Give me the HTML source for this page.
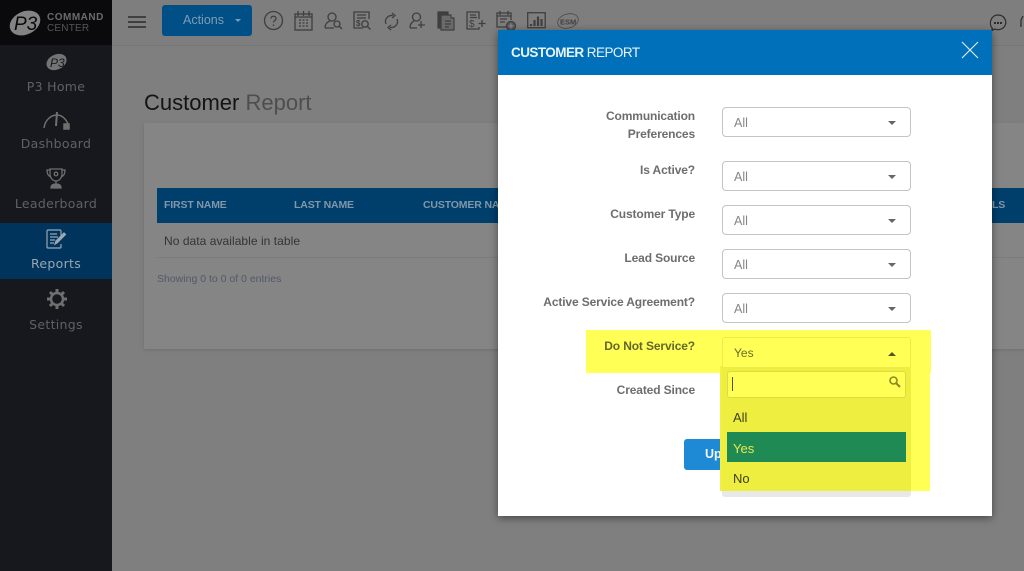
<!DOCTYPE html>
<html><head><meta charset="utf-8"><style>
html,body{margin:0;padding:0;width:1024px;height:571px;overflow:hidden;background:#7f7f7f;font-family:"Liberation Sans",sans-serif}
div,span{position:absolute;white-space:nowrap}
svg{position:absolute;overflow:visible}
.nav{left:0;width:112px;text-align:center;color:#5f6164;letter-spacing:.3px;font-family:"DejaVu Sans","Liberation Sans",sans-serif;font-size:12.5px}
.th{top:199px;font-size:10.5px;font-weight:bold;color:#7f97a8;letter-spacing:-.15px}
.lb{font-size:12px;font-weight:bold;color:#6d6d6d;text-align:right;line-height:18px;letter-spacing:-.13px;right:329px}
.sel{left:722px;width:187px;height:28px;border:1px solid #c4c4c4;border-radius:4px;background:#fff}
.sel span{left:11px;top:8px;font-size:12.5px;color:#858585}
.sel i{position:absolute;left:165px;top:13px;width:0;height:0;border-left:4px solid transparent;border-right:4px solid transparent;border-top:4px solid #666}
.ic{fill:none;stroke:#3f3f3f;stroke-width:1.3}
</style></head><body>
<!-- topbar -->
<div style="left:112px;top:0;width:912px;height:45px;background:#7e7e7e;border-bottom:1px solid #767676"></div>
<!-- sidebar -->
<div style="left:0;top:0;width:112px;height:571px;background:#16181d"></div>
<div style="left:0;top:0;width:112px;height:45px;background:#0a0a0c"></div>
<svg style="left:9px;top:9px" width="32" height="28" viewBox="0 0 32 28"><ellipse cx="16" cy="14" rx="16" ry="11.5" transform="rotate(-25 16 14)" fill="#838383"/><text x="5" y="21" font-family="Liberation Sans" font-style="italic" font-size="19" fill="#0a0a0c">P3</text></svg>
<div style="left:47px;top:12px;font-size:10px;font-weight:bold;color:#6b6b6b;letter-spacing:.5px">COMMAND</div>
<div style="left:47px;top:23px;font-size:10px;color:#555;letter-spacing:.2px">CENTER</div>
<svg style="left:46px;top:53px" width="21" height="18" viewBox="0 0 21 18"><ellipse cx="10.500" cy="9" rx="10.500" ry="7.500" transform="rotate(-25 10.500 9)" fill="#747474"/><text x="4" y="14" font-family="Liberation Sans" font-style="italic" font-size="12" fill="#16181d">P3</text></svg>
<div class="nav" style="top:79px">P3 Home</div>
<svg style="left:42px;top:110px" width="29" height="20" viewBox="0 0 29 20" fill="none" stroke="#6f6f6f" stroke-width="1.500"><path d="M2 18C3 10 9 5 15 5C21 5 26 11 27 18"/><path d="M15 2L14 16" stroke-width="2"/><path d="M22 14h5v5h-5z" fill="#6f6f6f"/></svg>
<div class="nav" style="top:136px">Dashboard</div>
<svg style="left:46px;top:167px" width="20" height="22" viewBox="0 0 20 22" fill="none" stroke="#6f6f6f" stroke-width="1.300"><path d="M4 2h12v5c0 4-3 7-6 7s-6-3-6-7z"/><path d="M4 3H1c0 4 1 6 4 7M16 3h3c0 4-1 6-4 7"/><circle cx="10" cy="7" r="1.800"/><path d="M10 14v3"/><path d="M5 21c0-3 2-4 5-4s5 1 5 4z" fill="#6f6f6f"/></svg>
<div class="nav" style="top:196px">Leaderboard</div>
<div style="left:0;top:223px;width:112px;height:56px;background:#00345c"></div>
<svg style="left:46px;top:229px" width="20" height="20" viewBox="0 0 20 20" fill="none" stroke="#9aa7b3" stroke-width="1.200"><path d="M15 7V2a1 1 0 0 0-1-1H2a1 1 0 0 0-1 1v16a1 1 0 0 0 1 1h12a1 1 0 0 0 1-1v-3"/><path d="M4 5h7M4 8h8M4 11h5M4 14h4"/><path d="M9 15l1-3 8-8 1.500 1.500-8 8z" fill="#9aa7b3"/></svg>
<div class="nav" style="top:256px;color:#98a6b3">Reports</div>
<svg style="left:46px;top:288px" width="22" height="22" viewBox="0 0 22 22" fill="none" stroke="#6f6f6f"><circle cx="11" cy="11" r="6" stroke-width="2.500"/><path d="M11 1v4M11 17v4M1 11h4M17 11h4M4 4l3 3M15 15l3 3M18 4l-3 3M7 15l-3 3" stroke-width="3"/></svg>
<div class="nav" style="top:317px">Settings</div>
<!-- toolbar -->
<svg style="left:128px;top:16px" width="19" height="12"><path d="M0 1h18M0 6h18M0 11h18" stroke="#2b2b2b" stroke-width="1.600"/></svg>
<div style="left:162px;top:5px;width:90px;height:31px;background:#004f86;border-radius:3px"></div>
<div style="left:183px;top:13px;font-size:12.5px;color:#7f9db5">Actions</div>
<div style="left:235px;top:19px;width:0;height:0;border-left:3px solid transparent;border-right:3px solid transparent;border-top:3px solid #7f9db5"></div>
<svg class="ic" style="left:264px;top:11px" width="20" height="20" viewBox="0 0 20 20"><circle cx="9.500" cy="9.500" r="9"/><path d="M7 7.500c0-3 5-3 5 0 0 2-2.500 2-2.500 4M9.500 13.500v1.500"/></svg>
<svg class="ic" style="left:294px;top:11px" width="20" height="20" viewBox="0 0 20 20"><rect x="1" y="3" width="17" height="16"/><path d="M4 0v5M9.500 0v5M15 0v5M1 6h17"/><path d="M5 9h9M5 12h9M5 15h9" stroke-dasharray="2 1.500"/></svg>
<svg class="ic" style="left:324px;top:12px" width="20" height="18" viewBox="0 0 20 18"><circle cx="8" cy="5" r="4"/><path d="M1 16c0-4 2-6 5-7M10 16H1"/><circle cx="13" cy="12" r="3"/><path d="M15 14l3 3"/></svg>
<svg class="ic" style="left:353px;top:11px" width="20" height="20" viewBox="0 0 20 20"><path d="M16 8V1H1v16h9"/><path d="M4 4h9M4 7h9"/><text x="3" y="15" font-size="8" font-weight="bold" fill="#3f3f3f" stroke="none" font-family="Liberation Sans">$</text><circle cx="12" cy="13" r="3.200"/><path d="M14 15l3.500 3.500"/></svg>
<svg class="ic" style="left:384px;top:12px" width="15" height="19" viewBox="0 0 15 19" stroke-width="1.800"><path d="M2 12C0 7 4 3 9 3.500M13 7c2 5-2 9-7 8.500"/><path d="M8 1l3 2.500-3 2.500M7 13l-3 2.500 3 2.500"/></svg>
<svg class="ic" style="left:409px;top:12px" width="18" height="18" viewBox="0 0 18 18"><circle cx="7.500" cy="5" r="4"/><path d="M1 16c0-4 2-6 4-7M1 16h7M12 9l0 7M9 13h7"/></svg>
<svg style="left:437px;top:11px" width="18" height="20" viewBox="0 0 18 20" fill="none" stroke="#3f3f3f" stroke-width="1.200"><path d="M1 1h10v3H4v13H1z" fill="#3f3f3f"/><path d="M4 4h10v3h3v12H4z" fill="#6a6a6a"/><path d="M8 10h6M8 13h6M8 16h4"/></svg>
<svg class="ic" style="left:466px;top:11px" width="20" height="20" viewBox="0 0 20 20"><path d="M13 8V1H1v17h12v-2"/><path d="M4 4h6M4 6.500h7"/><text x="3" y="16" font-size="10" fill="#3f3f3f" stroke="none" font-family="Liberation Sans">$</text><path d="M16 9v7M12.500 12.500h7"/></svg>
<svg class="ic" style="left:496px;top:10px" width="21" height="21" viewBox="0 0 21 21"><path d="M10 17H1V3h14v7"/><path d="M4 1v4M12 1v4M1 6h14M4 9h7M4 12h5"/><circle cx="15" cy="16" r="4.500" fill="#5a5a5a"/><path d="M12.500 16h5M15 13.500v5" stroke="#888"/></svg>
<svg style="left:527px;top:12px" width="19" height="17" viewBox="0 0 19 17" fill="none" stroke="#3f3f3f" stroke-width="1.300"><rect x=".7" y=".7" width="17.500" height="15"/><path d="M4 14v-2M7.500 14V8M11 14V4.500M14.500 14V7" stroke-width="2.200"/></svg>
<svg style="left:557px;top:12px" width="23" height="18" viewBox="0 0 23 18"><ellipse cx="11" cy="9" rx="10.500" ry="7" transform="rotate(-15 11 9)" fill="none" stroke="#4a4a4a" stroke-width=".8"/><text x="3" y="12.500" font-size="7.500" font-weight="bold" fill="#3f3f3f" font-family="Liberation Sans">ESM</text></svg>
<svg style="left:989px;top:14px" width="18" height="18" viewBox="0 0 18 18" fill="none" stroke="#2b2b2b" stroke-width="1.200"><path d="M3.500 14.500C-1 10 2 1 9 1c7 0 9 7 7 10.500-2 4-7 5-10 3.500L2 17z"/><path d="M5 9h2M8 9h2M11 9h2" stroke-width="2"/></svg>
<svg style="left:1020px;top:14px" width="4" height="18"><path d="M3 2L1 6v6H0" fill="none" stroke="#2b2b2b" stroke-width="1.200"/></svg>
<!-- content -->
<div style="left:144px;top:90px;font-size:22px;color:#141414;letter-spacing:0">Customer <span style="position:static;color:#4e4e4e">Report</span></div>
<div style="left:144px;top:123px;width:880px;height:226px;background:#858585;box-shadow:0 1px 3px #6f6f6f"></div>
<div style="left:157px;top:188px;width:867px;height:35px;background:#003f6c"></div>
<div class="th" style="left:164px">FIRST NAME</div>
<div class="th" style="left:294px">LAST NAME</div>
<div class="th" style="left:423px">CUSTOMER NAME</div>
<div class="th" style="left:992px">LS</div>
<div style="left:164px;top:234px;font-size:12px;color:#343434;letter-spacing:.05px">No data available in table</div>
<div style="left:157px;top:257px;width:867px;height:1px;background:#7c7c7c"></div>
<div style="left:157px;top:273px;font-size:10.500px;color:#53586a">Showing 0 to 0 of 0 entries</div>
<!-- modal -->
<div style="left:498px;top:30px;width:494px;height:486px;background:#fff;box-shadow:0 2px 8px rgba(0,0,0,.45)"></div>
<div style="left:498px;top:30px;width:494px;height:45px;background:#0070ba"></div>
<div style="left:511px;top:45px;font-size:13.5px;color:#eaf3fa;letter-spacing:-.55px"><b>CUSTOMER</b> REPORT</div>
<svg style="left:961px;top:41px" width="18" height="18"><path d="M1 1l16 16M17 1L1 17" stroke="#dcebf6" stroke-width="1.200"/></svg>
<div class="lb" style="top:107px">Communication<br>Preferences</div>
<div class="lb" style="top:161px">Is Active?</div>
<div class="lb" style="top:205px">Customer Type</div>
<div class="lb" style="top:249px">Lead Source</div>
<div class="lb" style="top:293px">Active Service Agreement?</div>
<div class="lb" style="top:381px">Created Since</div>
<div class="sel" style="top:107px"><span>All</span><i></i></div>
<div class="sel" style="top:161px"><span>All</span><i></i></div>
<div class="sel" style="top:205px"><span>All</span><i></i></div>
<div class="sel" style="top:249px"><span>All</span><i></i></div>
<div class="sel" style="top:293px"><span>All</span><i></i></div>
<div style="left:684px;top:439px;width:50px;height:31px;background:#1e8ad6;border-radius:3px"></div>
<div style="left:705px;top:447px;font-size:12.500px;font-weight:bold;color:#f2f8fc">Up</div>
<!-- highlight: yellow band + dropdown -->
<div style="left:586px;top:330px;width:345px;height:43px;background:#ffff56"></div>
<div style="left:720px;top:366px;width:210px;height:125px;background:#ffff56"></div>
<div style="left:722px;top:367px;width:189px;height:130px;background:#e8e8e8;border-radius:0 0 3px 3px"></div>
<div style="left:722px;top:367px;width:189px;height:124px;background:#eeee40"></div>
<div style="left:720px;top:366px;width:2px;height:125px;background:#f0f044"></div>
<div style="left:911px;top:366px;width:19px;height:125px;background:#ffff56"></div>
<div style="left:722px;top:337px;width:187px;height:29px;border:1px solid #ecec48;border-radius:3px 3px 0 0;background:#ffff56"></div>
<div class="lb" style="top:337px;color:#66662a">Do Not Service?</div>
<div style="left:734px;top:346px;font-size:12px;color:#6a6a28">Yes</div>
<div style="left:888px;top:352px;width:0;height:0;border-left:4px solid transparent;border-right:4px solid transparent;border-bottom:4px solid #55551f"></div>
<div style="left:727px;top:371px;width:177px;height:25px;background:#ffff56;border:1px solid #dcdc40;border-radius:3px"></div>
<div style="left:732px;top:377px;width:1px;height:14px;background:#55552a"></div>
<svg style="left:889px;top:376px" width="12" height="12" fill="none" stroke="#8a8a20" stroke-width="1.600"><circle cx="4.500" cy="4.500" r="3.500"/><path d="M7 7l4 4" stroke-width="2"/></svg>
<div style="left:733px;top:410px;font-size:13px;color:#40401c">All</div>
<div style="left:727px;top:432px;width:179px;height:30px;background:#208a54"></div>
<div style="left:733px;top:441px;font-size:13px;color:#e8e850">Yes</div>
<div style="left:733px;top:471px;font-size:13px;color:#40401c">No</div>
</body></html>
